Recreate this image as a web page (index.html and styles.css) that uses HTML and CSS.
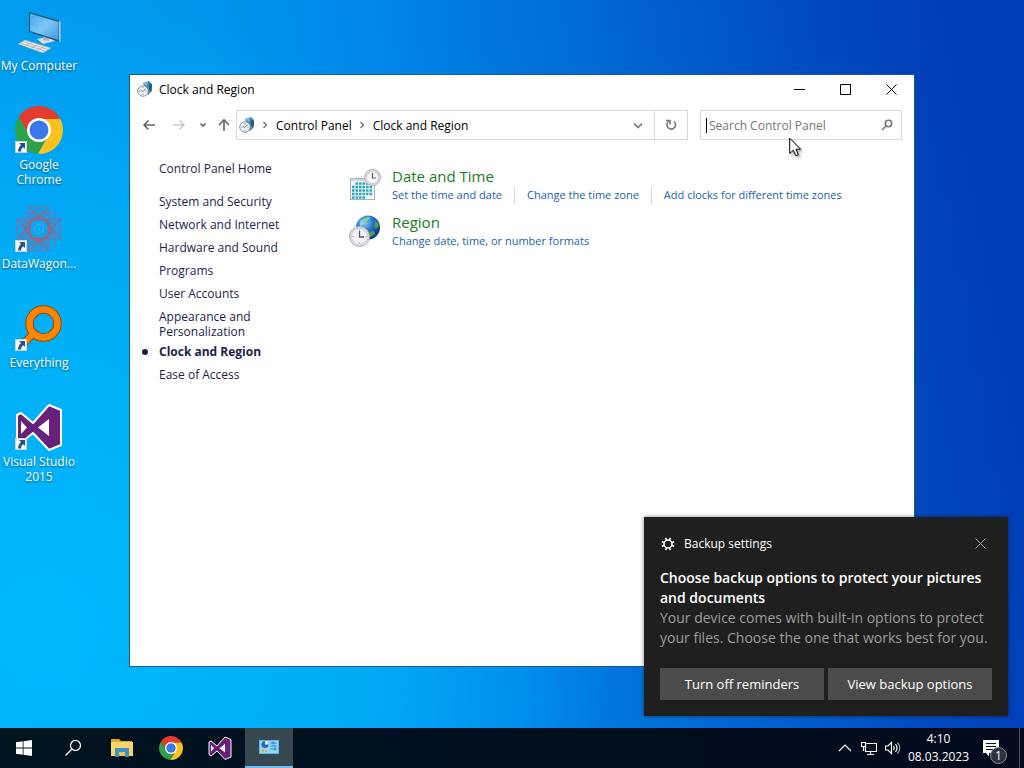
FILE: index.html
```
<!DOCTYPE html>
<html lang="en">
<head>
  <meta charset="UTF-8">
  <title>Clock and Region</title>
  <meta name="viewport" content="width=device-width, initial-scale=1.0">
  <link rel="stylesheet" href="styles.css">
</head>
<body>
  <!-- shared icons -->
  <svg class="sprite" aria-hidden="true">
    <defs>
      <linearGradient id="screenFill" x1="0" y1="0" x2="1" y2="1">
        <stop offset="0" stop-color="#4aa8ec"/>
        <stop offset="0.5" stop-color="#7cc6f6"/>
        <stop offset="1" stop-color="#3d9be6"/>
      </linearGradient>
      <radialGradient id="globeFill" cx="0.35" cy="0.3" r="0.75">
        <stop offset="0" stop-color="#8fd4f5"/>
        <stop offset="0.45" stop-color="#2c77cf"/>
        <stop offset="1" stop-color="#0c2c86"/>
      </radialGradient>
    </defs>
    <symbol id="chrome" viewBox="0 0 48 48">
      <path fill="#e33b2e" d="M24 24V13H45.3A24 24 0 0 0 3.8 11.05L14.5 29.5z"/>
      <path fill="#2da14c" d="M24 24L14.5 29.5L3.8 11.05A24 24 0 0 0 22.9 47.95L33.5 29.5z"/>
      <path fill="#fcc31e" d="M24 24L33.5 29.5L22.9 47.95A24 24 0 0 0 45.3 13H24z"/>
      <circle cx="24" cy="24" r="12" fill="#fff"/>
      <circle cx="24" cy="24" r="9.500" fill="#3b78e7"/>
    </symbol>
    <symbol id="vs" viewBox="0 0 48 48">
      <path fill="#68217a" stroke="#fff" stroke-width="2" stroke-linejoin="round" d="M2 12L6 10L18 20L34 2L46 7V42L34 47L18 30L6 40L2 37z"/>
      <path fill="#fff" d="M6 18V31L12 24.5zM23 24.5L34 16V33z"/>
    </symbol>
    <symbol id="shortcut" viewBox="0 0 12 12">
      <rect width="12" height="12" fill="#fff"/>
      <rect x="0.5" y="0.500" width="11" height="11" fill="none" stroke="#c9d3de"/>
      <path fill="#274f94" d="M4 2H10V8L8.200 6.200C6.500 7.500 6 8.500 6.200 10.500H3C3 8 4 6 6 4z"/>
    </symbol>
    <symbol id="region" viewBox="0 0 32 32">
      <circle cx="19" cy="12.500" r="12" fill="url(#globeFill)"/>
      <path fill="#45a33e" d="M13 5Q15 2 18 2L20 5L16 8L14 9zM26 5Q29 7 30 11L27 14L25 11L26 8zM21 17L25 16L26 19L22 22L20 20z"/>
      <path fill="#b7e6fb" opacity=".6" d="M11 7Q15 2 22 2Q18 7 11 12z"/>
      <circle cx="10.500" cy="21.500" r="10" fill="#dfe2e5" stroke="#a7acb3"/>
      <circle cx="10.500" cy="21.500" r="8" fill="#f3f4f5" stroke="#c9ccd1"/>
      <path fill="none" stroke="#555b63" stroke-width="1.300" d="M10.500 16V22H15"/>
      <path stroke="#8b9199" d="M10.500 14.500v1M10.500 27.500v1M3.500 21.500h1M16.500 21.500h1"/>
    </symbol>
    <symbol id="region-small" viewBox="0 0 16 16">
      <path fill="#3f86ac" d="M6 2L12 0L15 3V10L11 14z"/>
      <path fill="#7cc0dc" d="M6 2L11 1L10 5z"/>
      <path fill="#245878" d="M12 3L15 4L14 10L12 9z"/>
      <circle cx="6" cy="10" r="5.300" fill="#eef1f4" stroke="#8793a0"/>
      <path fill="none" stroke="#7b8895" d="M8.500 7.500L6 10.500L4 9.500M6 6v1M6 13v1M2.500 10h1M8.500 10h1"/>
    </symbol>
  </svg>

  <main class="desktop">
    <nav class="shortcuts" aria-label="Desktop">
      <a class="shortcut" href="#">
        <svg class="shortcut-icon" viewBox="0 0 48 48">
          <path fill="#d8dee5" d="M22 32L33 30L40 34L28 37z"/>
          <path fill="#aab5c0" d="M28 28L34 30V34L28 33z"/>
          <path fill="#2b526f" d="M14 5L45 14V35L14 25z"/>
          <path fill="#b9c7d2" d="M44 14L45.500 14V35L44 34.500z"/>
          <path fill="url(#screenFill)" d="M15 6.500L43.500 15V33L15 24z"/>
          <path fill="#e6e8eb" stroke="#9aa4ae" stroke-width=".6" d="M3 37L10 33L36 41L28 46z"/>
          <path fill="none" stroke="#a2aab2" stroke-width=".7" d="M5 36L30 44M8 34.500L33 42.500M10 39L17 35.500M16 41L23 37.500M22 43L29 39.500"/>
        </svg>
        <span>My Computer</span>
      </a>
      <a class="shortcut" href="#">
        <svg class="shortcut-icon" viewBox="0 0 48 48">
          <use href="#chrome" width="48" height="48"/>
          <use href="#shortcut" y="35" width="12" height="12"/>
        </svg>
        <span>Google Chrome</span>
      </a>
      <a class="shortcut" href="#">
        <svg class="shortcut-icon" viewBox="0 0 48 48">
          <g fill="none" stroke="#6c7bb0" stroke-width="1.100">
            <path d="M8 8H40V40H8zM24 2L46 24L24 46L2 24z"/>
            <path d="M14 2H34V46H14zM2 14H46V34H2z"/>
            <path stroke="#a0607f" d="M15 15H33V33H15zM24 10L38 24L24 38L10 24zM19 11L37 19L29 37L11 29zM29 11L37 29L19 37L11 19z"/>
            <path stroke="#94668c" d="M14 2L24 12L34 2M14 46L24 36L34 46M2 14L12 24L2 34M46 14L36 24L46 34"/>
            <circle cx="24" cy="24" r="4.500" stroke="#6f93cf"/>
          </g>
          <use href="#shortcut" y="35" width="12" height="12"/>
        </svg>
        <span>DataWagon...</span>
      </a>
      <a class="shortcut" href="#">
        <svg class="shortcut-icon" viewBox="0 0 48 48">
          <path stroke="#8a4c05" stroke-width="8" d="M18 30L6 42"/>
          <circle cx="28.500" cy="19.500" r="14" fill="none" stroke="#8a4c05" stroke-width="8.500"/>
          <path stroke="#ff8400" stroke-width="6" d="M20 28L6 42"/>
          <circle cx="28.500" cy="19.500" r="14" fill="none" stroke="#ff8400" stroke-width="6.500"/>
          <use href="#shortcut" y="35" width="12" height="12"/>
        </svg>
        <span>Everything</span>
      </a>
      <a class="shortcut" href="#">
        <svg class="shortcut-icon" viewBox="0 0 48 48">
          <use href="#vs" width="48" height="48"/>
          <use href="#shortcut" y="35" width="12" height="12"/>
        </svg>
        <span>Visual Studio 2015</span>
      </a>
    </nav>

    <section class="window">
      <header class="titlebar">
        <svg class="icon16"><use href="#region-small"/></svg>
        <h1 class="window-title">Clock and Region</h1>
        <button class="win-btn" aria-label="Minimize"><svg viewBox="0 0 11 11"><path d="M0 5.500h11"/></svg></button>
        <button class="win-btn" aria-label="Maximize"><svg viewBox="0 0 11 11"><path d="M.5.5h10v10H.5z"/></svg></button>
        <button class="win-btn" aria-label="Close"><svg viewBox="0 0 11 11"><path d="M.5.5l10 10M10.500.5l-10 10"/></svg></button>
      </header>

      <div class="toolbar">
        <div class="nav-buttons">
          <button class="nav-btn" aria-label="Back"><svg class="icon16" viewBox="0 0 16 16"><path d="M14 8H3M7.500 3.500L3 8l4.500 4.500"/></svg></button>
          <button class="nav-btn disabled" aria-label="Forward"><svg class="icon16" viewBox="0 0 16 16"><path d="M2 8h11M8.500 3.500L13 8l-4.500 4.500"/></svg></button>
          <button class="nav-btn recent" aria-label="Recent"><svg class="icon16" viewBox="0 0 16 16"><path d="M5.500 6.500L8 9l2.500-2.500"/></svg></button>
          <button class="nav-btn up" aria-label="Up"><svg class="icon16" viewBox="0 0 16 16"><path d="M8 14V3M3 8l5-5 5 5"/></svg></button>
        </div>
        <div class="address">
          <svg class="icon16"><use href="#region-small"/></svg>
          <svg class="sep" viewBox="0 0 6 8"><path d="M1.500 1L4.500 4l-3 3"/></svg>
          <a href="#">Control Panel</a>
          <svg class="sep" viewBox="0 0 6 8"><path d="M1.500 1L4.500 4l-3 3"/></svg>
          <a href="#">Clock and Region</a>
          <button class="address-btn drop" aria-label="Previous locations"><svg class="icon16" viewBox="0 0 16 16"><path d="M4 6.500l4 4 4-4"/></svg></button>
          <button class="address-btn refresh" aria-label="Refresh"><svg class="icon16" viewBox="0 0 16 16"><path d="M11 4.500A4.300 4.300 0 1 1 5.500 4.500M3 3.500H7V7.500"/></svg></button>
        </div>
        <label class="search">
          <span class="caret"></span>
          <input type="text" placeholder="Search Control Panel" aria-label="Search Control Panel">
          <svg class="icon16" viewBox="0 0 16 16"><circle cx="9.500" cy="6.500" r="3.200"/><path d="M7 9L3 13"/></svg>
        </label>
      </div>

      <div class="content">
        <nav class="sidebar">
          <a class="home" href="#">Control Panel Home</a>
          <ul>
            <li><a href="#">System and Security</a></li>
            <li><a href="#">Network and Internet</a></li>
            <li><a href="#">Hardware and Sound</a></li>
            <li><a href="#">Programs</a></li>
            <li><a href="#">User Accounts</a></li>
            <li><a href="#">Appearance and Personalization</a></li>
            <li class="current"><a href="#">Clock and Region</a></li>
            <li><a href="#">Ease of Access</a></li>
          </ul>
        </nav>

        <div class="categories">
          <section class="category">
            <svg class="category-icon" viewBox="0 0 32 32">
              <rect x="1.500" y="9.500" width="24" height="21" fill="#f4f6f8" stroke="#a9b2ba"/>
              <path fill="#cfd6dc" d="M2 10h23v2H2z"/>
              <path fill="none" stroke="#2ca6c4" stroke-width="2.500" stroke-dasharray="2.500 1" d="M6.500 14.500h16.500M3 18h20M3 21.500h20M3 25h20M3 28.500h13"/>
              <circle cx="23.500" cy="8.500" r="8" fill="#dfe2e5" stroke="#a7acb3"/>
              <circle cx="23.500" cy="8.500" r="6" fill="#f6f7f7" stroke="#c9ccd1"/>
              <path fill="none" stroke="#555b63" stroke-width="1.200" d="M23.500 4V9H27"/>
            </svg>
            <div>
              <h2><a href="#">Date and Time</a></h2>
              <div class="tasks">
                <a href="#">Set the time and date</a>
                <a href="#">Change the time zone</a>
                <a href="#">Add clocks for different time zones</a>
              </div>
            </div>
          </section>
          <section class="category">
            <svg class="category-icon"><use href="#region"/></svg>
            <div>
              <h2><a href="#">Region</a></h2>
              <div class="tasks">
                <a href="#">Change date, time, or number formats</a>
              </div>
            </div>
          </section>
        </div>
      </div>
    </section>

    <aside class="toast">
      <header class="toast-header">
        <svg class="icon16" viewBox="0 0 16 16">
          <circle cx="8" cy="8" r="4" fill="none" stroke="#fff" stroke-width="1.500"/>
          <path stroke="#fff" stroke-width="1.600" d="M6.500 4L5.500 1.800M9.500 4L10.500 1.800M6.500 12L5.500 14.200M9.500 12L10.500 14.200M4 6.500L1.800 5.500M4 9.500L1.800 10.500M12 6.500L14.200 5.500M12 9.500L14.200 10.500"/>
        </svg>
        <span>Backup settings</span>
        <button class="toast-close" aria-label="Dismiss"><svg viewBox="0 0 11 11"><path d="M.5.5l10 10M10.500.5l-10 10"/></svg></button>
      </header>
      <h2>Choose backup options to protect your pictures and documents</h2>
      <p>Your device comes with built-in options to protect your files. Choose the one that works best for you.</p>
      <div class="toast-actions">
        <button>Turn off reminders</button>
        <button>View backup options</button>
      </div>
    </aside>

    <svg class="pointer" viewBox="0 0 13 20">
      <path fill="#fff" stroke="#000" d="M.7 1.200V16.500L4.300 13.200L6.800 18.800L9.300 17.700L6.900 12.200H11.600z"/>
    </svg>
  </main>

  <footer class="taskbar">
    <button class="task-btn" aria-label="Start">
      <svg class="icon16" viewBox="0 0 16 16"><path fill="#fff" d="M0 2.300L6.700 1.300V7.600H0zM7.500 1.200L16 0V7.600H7.500zM0 8.400H6.700V14.700L0 13.700zM7.500 8.400H16V16L7.500 14.800z"/></svg>
    </button>
    <button class="task-btn" aria-label="Search">
      <svg class="icon16" viewBox="0 0 16 16"><circle cx="10.500" cy="5.500" r="5" fill="none" stroke="#fff" stroke-width="1.200"/><path stroke="#fff" stroke-width="1.200" d="M7 9L.5 15.500"/></svg>
    </button>
    <button class="task-btn" aria-label="File Explorer">
      <svg class="icon24" viewBox="0 0 24 24"><path fill="#dfa52c" d="M1 3H9L11 5H22V8H1z"/><path fill="#fbd569" d="M1 6H23V20H1z"/><path fill="#3f90c6" d="M5 12H19V21H15V16H9V21H5z"/><path fill="#f5c64d" d="M9 16H15V20H9z"/></svg>
    </button>
    <button class="task-btn" aria-label="Google Chrome"><svg class="icon24"><use href="#chrome"/></svg></button>
    <button class="task-btn" aria-label="Visual Studio 2015"><svg class="icon24"><use href="#vs"/></svg></button>
    <button class="task-btn active" aria-label="Clock and Region">
      <svg class="icon24" viewBox="0 0 24 24"><rect x="2" y="5" width="20" height="14" fill="#8fd6fa"/><rect x="2.500" y="5.500" width="19" height="13" fill="none" stroke="#5eb7e8"/><circle cx="8" cy="9.500" r="3.500" fill="#2369ad"/><path fill="#fff" d="M8 9.500V6A3.500 3.500 0 0 1 11.500 9.500z"/><path stroke="#2b7fbd" stroke-width="1.200" d="M13.500 8h6M13.500 11h6M13.500 14h6M16 6.500v3M18 12.500v3"/><path fill="#e9a63b" d="M5 14h2v3H5zM8 15h2v2H8z"/></svg>
    </button>

    <div class="tray">
      <button class="tray-btn" aria-label="Show hidden icons"><svg class="icon16" viewBox="0 0 16 16"><path d="M2 11l6-6 6 6"/></svg></button>
      <button class="tray-btn" aria-label="Network"><svg class="icon16" viewBox="0 0 16 16"><path d="M5.500 3.500h10v8h-11V7M.5 2.500h4v4h-4zM2.500 6.500v4.500M9.500 11.500v3M6 14.500h7"/></svg></button>
      <button class="tray-btn" aria-label="Volume"><svg class="icon16" viewBox="0 0 16 16"><path d="M.5 6H3l3.500-3.500v11L3 10H.5zM8.500 6Q10 8 8.500 10M10.500 4Q13.500 8 10.500 12"/><path opacity=".6" d="M12.500 2.500Q17 8 12.500 13.500"/></svg></button>
      <time class="clock" datetime="2023-03-08T04:10"><span>4:10</span><span>08.03.2023</span></time>
      <button class="action-center" aria-label="Notifications">
        <svg viewBox="0 0 18 17"><path fill="#fff" d="M0 0H16V13H6V16.500L3 13H0z"/><path stroke="#061021" d="M3 3.500h10M3 6.500h10M3 9.500h7"/></svg>
        <span class="badge">1</span>
      </button>
    </div>
  </footer>
</body>
</html>
```
FILE: styles.css
```
* { box-sizing: border-box; }

body {
  margin: 0;
  height: 100vh;
  display: flex;
  flex-direction: column;
  overflow: hidden;
  font-family: 'Segoe UI', 'Open Sans', 'Noto Sans', sans-serif;
  font-size: 12px;
  line-height: 15px;
  color: #000;
  background:
    radial-gradient(ellipse 560px 640px at 5% 82%, rgba(0,184,255,0.95), rgba(0,180,250,0.8) 50%, rgba(0,150,240,0)),
    linear-gradient(80deg, #009ff0 0%, #0096ec 29%, #0084e8 45%, #0076dc 54%, #0062cf 67%, #004cc0 80%, #003cb6 93%);
}

h1, h2, p, ul {
  margin: 0;
  padding: 0;
}

a {
  color: inherit;
  text-decoration: none;
}

button {
  display: flex;
  align-items: center;
  justify-content: center;
  padding: 0;
  border: none;
  background: none;
  font-family: inherit;
  cursor: default;
}

.sprite {
  position: absolute;
  width: 0;
  height: 0;
}

.icon16 { width: 16px; height: 16px; flex: none; }
.icon24 { width: 24px; height: 24px; flex: none; }

/* desktop */
.desktop {
  flex: 1;
  position: relative;
}

.shortcuts {
  width: 78px;
  padding-top: 7px;
}

.shortcut {
  display: flex;
  flex-direction: column;
  align-items: center;
  gap: 3px;
  height: 99px;
  color: #fff;
  text-align: center;
  text-shadow: 0 1px 2px rgba(0,0,0,0.5);
}

.shortcut-icon {
  width: 48px;
  height: 48px;
  flex: none;
}

/* control panel window */
.window {
  position: absolute;
  top: 74px;
  left: 129px;
  right: 109px;
  bottom: 61px;
  display: flex;
  flex-direction: column;
  background: #fff;
  border: 1px solid #1b5a92;
}

.titlebar {
  display: flex;
  align-items: center;
  height: 28px;
  padding-left: 7px;
}

.window-title {
  flex: 1;
  margin-left: 6px;
  font-size: 12px;
  font-weight: normal;
}

.win-btn {
  width: 46px;
  height: 28px;
}

.win-btn svg, .toast-close svg {
  width: 11px;
  height: 11px;
  fill: none;
  stroke: #000;
}

.toolbar {
  display: flex;
  align-items: center;
  padding: 7px 12px 0 4px;
}

.nav-buttons {
  display: flex;
}

.nav-btn {
  width: 30px;
  height: 30px;
}

.nav-btn.recent { width: 17px; }
.nav-btn.up { width: 25px; }

.nav-btn svg {
  fill: none;
  stroke: #666;
  stroke-width: 1.6;
}

.nav-btn.disabled svg { stroke: #ccc; }

.address {
  flex: 1;
  display: flex;
  align-items: center;
  height: 30px;
  padding-left: 2px;
  border: 1px solid #d9d9d9;
}

.sep {
  width: 6px;
  height: 8px;
  margin: 0 8px 0 7px;
  fill: none;
  stroke: #666;
  stroke-width: 1.2;
}

.address-btn {
  width: 33px;
  height: 28px;
}

.address-btn svg {
  fill: none;
  stroke: #777;
  stroke-width: 1.6;
}

.drop { margin-left: auto; }
.refresh { border-left: 1px solid #d9d9d9; }

.search {
  display: flex;
  align-items: center;
  width: 202px;
  height: 30px;
  margin-left: 12px;
  padding: 0 6px 0 5px;
  border: 1px solid #d9d9d9;
}

.search input {
  flex: 1;
  min-width: 0;
  padding: 0 0 0 2px;
  border: none;
  outline: none;
  background: none;
  font: inherit;
}

.search input::placeholder { color: #757575; }

.search svg {
  fill: none;
  stroke: #777;
  stroke-width: 1.6;
}

.caret {
  width: 1px;
  height: 15px;
  background: #000;
}

.content {
  flex: 1;
  display: flex;
}

.sidebar {
  width: 219px;
  padding: 21px 40px 0 29px;
  color: #1e1e4b;
}

.home {
  display: block;
  margin-bottom: 18px;
}

.sidebar ul { list-style: none; }

.sidebar li {
  min-height: 23px;
  padding-bottom: 5px;
}

.sidebar .current {
  position: relative;
  font-weight: bold;
}

.current::before {
  content: "";
  position: absolute;
  left: -17px;
  top: 5px;
  width: 6px;
  height: 6px;
  border-radius: 50%;
  background: #1e1e4b;
}

.categories {
  flex: 1;
  padding-top: 26px;
}

.category {
  display: flex;
  gap: 11px;
  height: 46px;
}

.category-icon {
  width: 32px;
  height: 32px;
  margin-top: 3px;
  flex: none;
}

.category h2 {
  font-size: 15px;
  font-weight: normal;
  line-height: 20px;
  color: #1c7a24;
}

.tasks {
  display: flex;
  color: #1a5fb4;
  font-size: 11px;
  line-height: 18px;
  white-space: nowrap;
}

.tasks a + a {
  margin-left: 12px;
  padding-left: 12px;
  border-left: 1px solid #d9d9d9;
}

.pointer {
  position: absolute;
  left: 789px;
  top: 137px;
  width: 13px;
  height: 20px;
  filter: drop-shadow(2px 2px 1px rgba(0,0,0,0.3));
}

/* notification */
.toast {
  position: absolute;
  right: 16px;
  bottom: 12px;
  width: 364px;
  padding: 16px;
  background: #1f1f1f;
  color: #fff;
  box-shadow: 0 0 4px rgba(0,0,0,0.5);
}

.toast-header {
  display: flex;
  align-items: center;
  height: 21px;
  margin-bottom: 14px;
}

.toast-header span {
  flex: 1;
  margin-left: 8px;
}

.toast-close {
  width: 24px;
  height: 21px;
}

.toast-close svg { stroke: #a5a5a5; }

.toast h2, .toast p {
  font-size: 14px;
  line-height: 20px;
}

.toast h2 { font-weight: 600; }
.toast p { color: #9d9d9d; }

.toast-actions {
  display: flex;
  gap: 4px;
  margin-top: 20px;
}

.toast-actions button {
  flex: 1;
  height: 32px;
  background: #4b4b4b;
  color: #fff;
  font-size: 13px;
}

/* taskbar */
.taskbar {
  display: flex;
  gap: 1px;
  height: 40px;
  background: linear-gradient(90deg, #00141f, #000f20 50%, #020a1c);
}

.task-btn { width: 48px; }

.task-btn.active {
  background: #36474f;
  border-bottom: 2px solid #76b9ed;
}

.tray {
  display: flex;
  align-items: center;
  margin-left: auto;
  padding-right: 4px;
  color: #fff;
}

.tray-btn {
  width: 24px;
  height: 40px;
}

.tray-btn svg {
  fill: none;
  stroke: #fff;
  stroke-width: 1.2;
}

.clock {
  display: flex;
  flex-direction: column;
  align-items: center;
  width: 67px;
  line-height: 18px;
}

.action-center {
  position: relative;
  width: 48px;
  height: 40px;
  border-right: 1px solid #4b5563;
}

.action-center svg {
  width: 18px;
  height: 17px;
  margin-right: 8px;
}

.badge {
  position: absolute;
  right: 12px;
  bottom: 4px;
  width: 17px;
  height: 17px;
  border: 1px solid #8b8f96;
  border-radius: 50%;
  background: #2d333d;
  color: #fff;
  font-size: 12px;
  line-height: 15px;
  text-align: center;
}
```
